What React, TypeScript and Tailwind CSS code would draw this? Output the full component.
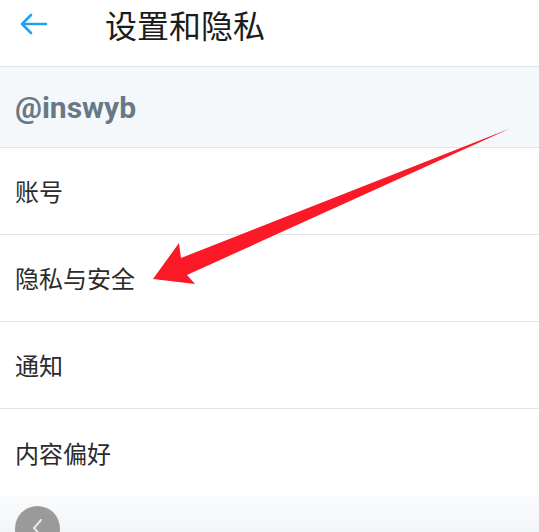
import React from 'react';

const font = { fontFamily: '"Noto Sans CJK SC", "Noto Sans", sans-serif' };

const rows = ['账号', '隐私与安全', '通知', '内容偏好'];

export default function App() {
  return (
    <div className="relative w-[539px] h-[532px] overflow-hidden bg-white" style={font}>
      {/* header */}
      <div className="h-[67px] flex items-center pb-[18px] border-b border-[#e1e4e6] bg-white">
        <div className="w-[105px] flex items-center pl-[20px]">
          <svg width="28" height="22" viewBox="0 0 28 22" fill="none" stroke="#1da1f2" strokeWidth="2.6" strokeLinecap="round" strokeLinejoin="round">
            <path d="M26 11H3" />
            <path d="M11 2L2 11l9 9" />
          </svg>
        </div>
        <h1 className="text-[32px] leading-none text-[#1c1c1c]">设置和隐私</h1>
      </div>

      {/* account */}
      <div className="h-[81px] flex items-center px-[15px] bg-[#f5f8fa] border-b border-[#e1e4e6]">
        <span className="text-[30px] font-bold text-[#687887]" style={{ fontFamily: 'Roboto, "Noto Sans", sans-serif' }}>
          @inswyb
        </span>
      </div>

      {/* list */}
      {rows.map((r, i) => (
        <div
          key={r}
          className={`h-[87px] flex items-center px-[15px] ${i < rows.length - 1 ? 'border-b border-[#e1e4e6]' : ''}`}
        >
          <span className="text-[24px] text-[#2b2b2b]">{r}</span>
        </div>
      ))}

      {/* bottom */}
      <div className="h-[40px] bg-gradient-to-b from-[#fafbfc] to-[#f2f5f8] px-[15px] pt-[10px]">
        <div className="w-[45px] h-[45px] rounded-full bg-[#9a9a9a] flex items-start justify-center pt-[12px]">
          <svg width="14" height="20" viewBox="0 0 14 20" fill="none" stroke="#e8e8e8" strokeWidth="2" strokeLinecap="round">
            <path d="M10 2L3 10l7 8" />
          </svg>
        </div>
      </div>

      {/* annotation arrow */}
      <svg className="absolute left-0 top-0" width="539" height="532" viewBox="0 0 539 532">
        <polygon
          points="153,279 179,243 181,258 511,128 187,275 195,284"
          fill="#fc1927"
        />
      </svg>
    </div>
  );
}
